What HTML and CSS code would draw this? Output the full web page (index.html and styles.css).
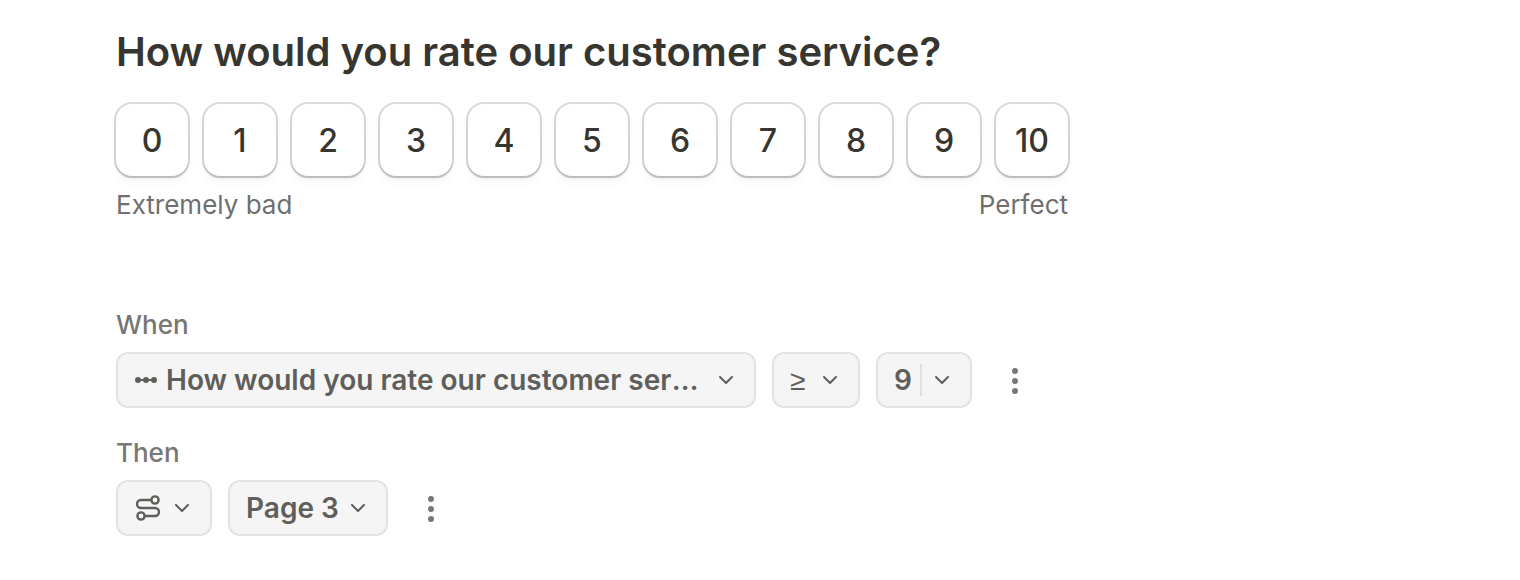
FILE: index.html
```html
<!DOCTYPE html>
<html lang="en">
<head>
    <meta charset="UTF-8">
    <meta name="viewport" content="width=device-width, initial-scale=1.0">
    <title>Customer service form</title>
    <link rel="stylesheet" href="styles.css">
</head>
<body>
    <main class="form">
        <section class="question">
            <h1 class="title">How would you rate our customer service?</h1>
            <div class="scale">
                <button type="button" class="score">0</button>
                <button type="button" class="score">1</button>
                <button type="button" class="score">2</button>
                <button type="button" class="score">3</button>
                <button type="button" class="score">4</button>
                <button type="button" class="score">5</button>
                <button type="button" class="score">6</button>
                <button type="button" class="score">7</button>
                <button type="button" class="score">8</button>
                <button type="button" class="score">9</button>
                <button type="button" class="score">10</button>
            </div>
            <div class="scale-labels">
                <span>Extremely bad</span>
                <span>Perfect</span>
            </div>
        </section>

        <section class="logic">
            <!-- Condition -->
            <div class="rule">
                <label class="rule-label" for="field">When</label>
                <div class="rule-row">
                    <div class="picker picker-field">
                        <select id="field">
                            <option>How would you rate our customer service?</option>
                        </select>
                        <svg class="icon" width="24" height="24" viewBox="0 0 24 24" aria-hidden="true">
                            <path d="M4 12h16" stroke="currentColor" stroke-width="2"/>
                            <circle cx="4" cy="12" r="3"/>
                            <circle cx="12" cy="12" r="3"/>
                            <circle cx="20" cy="12" r="3"/>
                        </svg>
                        <svg class="chevron" width="16" height="16" viewBox="0 0 16 16" aria-hidden="true">
                            <path d="M2 5l6 6 6-6"/>
                        </svg>
                    </div>
                    <div class="picker picker-operator">
                        <select aria-label="Operator">
                            <option>≥</option>
                        </select>
                        <svg class="chevron" width="16" height="16" viewBox="0 0 16 16" aria-hidden="true">
                            <path d="M2 5l6 6 6-6"/>
                        </svg>
                    </div>
                    <div class="picker picker-value">
                        <select aria-label="Value">
                            <option>9</option>
                        </select>
                        <span class="divider"></span>
                        <svg class="chevron" width="16" height="16" viewBox="0 0 16 16" aria-hidden="true">
                            <path d="M2 5l6 6 6-6"/>
                        </svg>
                    </div>
                    <button type="button" class="more" aria-label="Condition options">
                        <svg width="8" height="28" viewBox="0 0 8 28" aria-hidden="true">
                            <circle cx="4" cy="5" r="3"/>
                            <circle cx="4" cy="15" r="3"/>
                            <circle cx="4" cy="25" r="3"/>
                        </svg>
                    </button>
                </div>
            </div>

            <!-- Action -->
            <div class="rule">
                <label class="rule-label" for="action">Then</label>
                <div class="rule-row">
                    <div class="picker picker-action">
                        <select id="action">
                            <option value="jump"></option>
                        </select>
                        <svg class="icon icon-route" width="28" height="28" viewBox="0 0 28 28" aria-hidden="true">
                            <path d="M17 6H7a4 4 0 0 0 0 8h14a4 4 0 0 1 0 8H11"/>
                            <circle cx="21" cy="6" r="3.6"/>
                            <circle cx="7" cy="22" r="3.6"/>
                        </svg>
                        <svg class="chevron" width="16" height="16" viewBox="0 0 16 16" aria-hidden="true">
                            <path d="M2 5l6 6 6-6"/>
                        </svg>
                    </div>
                    <div class="picker picker-page">
                        <select aria-label="Page">
                            <option>Page 3</option>
                        </select>
                        <svg class="chevron" width="16" height="16" viewBox="0 0 16 16" aria-hidden="true">
                            <path d="M2 5l6 6 6-6"/>
                        </svg>
                    </div>
                    <button type="button" class="more" aria-label="Action options">
                        <svg width="8" height="28" viewBox="0 0 8 28" aria-hidden="true">
                            <circle cx="4" cy="5" r="3"/>
                            <circle cx="4" cy="15" r="3"/>
                            <circle cx="4" cy="25" r="3"/>
                        </svg>
                    </button>
                </div>
            </div>
        </section>
    </main>
</body>
</html>
```
FILE: styles.css
```css
* {
    box-sizing: border-box;
}
body {
    margin: 0;
    background: #fff;
    color: #37352f;
    font-family: Inter, "Liberation Sans", sans-serif;
}
button, select {
    font: inherit;
    color: inherit;
    margin: 0;
    cursor: pointer;
}
.form {
    max-width: 1184px;
    padding: 28px 116px 44px;
}

/* Rating question */
.title {
    margin: 0 0 28px;
    font-size: 40px;
    font-weight: 600;
    line-height: 48px;
}
.scale {
    display: flex;
    gap: 16px;
}
.score {
    flex: 1;
    height: 72px;
    padding: 0;
    border: none;
    border-radius: 16px;
    background: #fff;
    box-shadow: 0 0 0 2px rgba(0, 0, 0, 0.14), 0 2px 2px rgba(0, 0, 0, 0.12), 0 6px 10px rgba(0, 0, 0, 0.04);
    font-size: 32px;
    font-weight: 500;
}
.scale-labels {
    display: flex;
    justify-content: space-between;
    margin-top: 12px;
    color: #6f6f6f;
    font-size: 26px;
    line-height: 34px;
}

/* Conditional logic */
.logic {
    display: flex;
    flex-direction: column;
    gap: 28px;
    margin-top: 86px;
    color: #5f5e5b;
}
.rule {
    display: flex;
    flex-direction: column;
    align-items: flex-start;
    gap: 10px;
}
.rule-label {
    color: #787774;
    font-size: 26px;
    font-weight: 500;
    line-height: 34px;
}
.rule-row {
    display: flex;
    gap: 16px;
}
.picker {
    display: grid;
    align-items: center;
}
.picker > * {
    grid-area: 1 / 1;
}
.picker select {
    appearance: none;
    width: 100%;
    height: 56px;
    padding: 0 32px 0 16px;
    border: 2px solid #e3e3e3;
    border-radius: 12px;
    background: #f5f5f5;
    font-size: 28px;
    font-weight: 600;
    text-overflow: ellipsis;
}
.picker-field {
    width: 640px;
}
.picker-field select {
    padding-left: 48px;
    padding-right: 52px;
}
.picker-operator {
    width: 88px;
}
.picker-operator select {
    font-family: "Liberation Sans", sans-serif;
    font-weight: 400;
}
.picker-value,
.picker-action {
    width: 96px;
}
.picker-page {
    width: 160px;
}
.icon {
    margin-left: 18px;
    fill: currentColor;
    pointer-events: none;
}
.icon-route {
    fill: none;
    stroke: currentColor;
    stroke-width: 2.4;
}
.chevron {
    justify-self: end;
    margin-right: 22px;
    fill: none;
    stroke: currentColor;
    stroke-width: 2;
    stroke-linecap: round;
    stroke-linejoin: round;
    pointer-events: none;
}
.divider {
    width: 2px;
    height: 32px;
    margin-left: 44px;
    background: #e0e0e0;
}
.more {
    display: flex;
    align-items: center;
    justify-content: center;
    width: 54px;
    padding: 0;
    border: none;
    background: none;
    color: #787774;
    fill: currentColor;
}
```
